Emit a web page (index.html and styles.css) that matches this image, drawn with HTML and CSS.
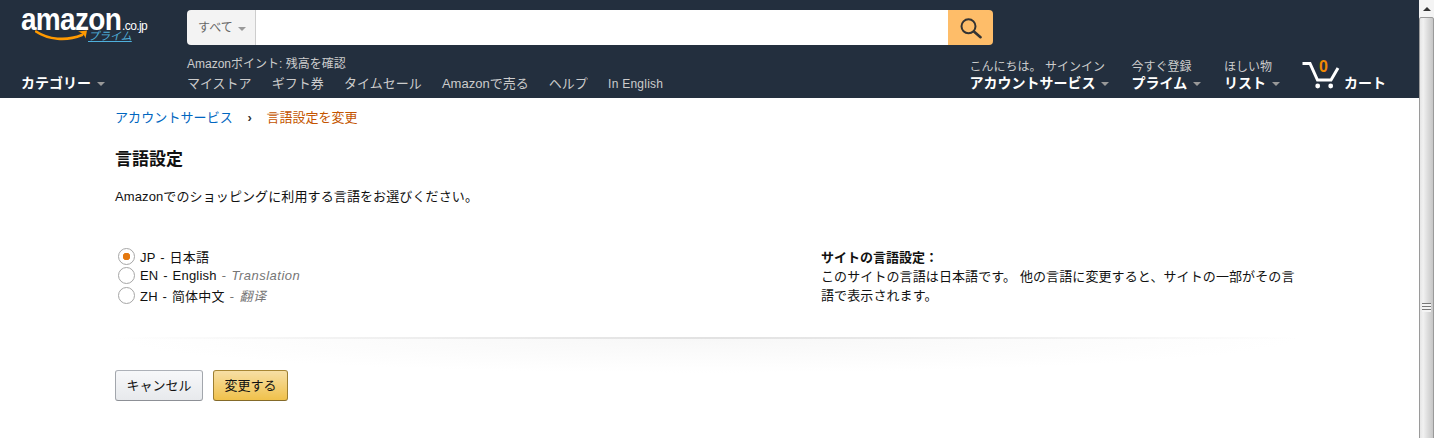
FILE: index.html
```html
<!DOCTYPE html>
<html lang="ja">
<head>
    <meta charset="UTF-8">
    <title>言語設定</title>
    <link rel="stylesheet" href="styles.css">
</head>
<body>
    <div class="page">
        <div class="header">
            <div class="header-top">
                <a class="logo" href="#">
                    <span class="logo-word">amazon</span><span class="logo-tld">.co.jp</span>
                    <span class="logo-prime">プライム</span>
                    <svg class="logo-smile" width="54" height="14" viewBox="0 0 54 14">
                        <path d="M1 1.5C13 9.5 31 11.5 47 5" fill="none" stroke="#f90" stroke-width="2.6" stroke-linecap="round"/>
                        <path d="M43 1.5L52 0.5L50.5 8.5C50 5.5 47 3 43 1.5Z" fill="#f90"/>
                    </svg>
                </a>
                <div class="search">
                    <div class="search-scope">すべて <span class="caret"></span></div>
                    <div class="search-input"></div>
                    <div class="search-btn">
                        <svg width="22" height="22" viewBox="0 0 22 22">
                            <circle cx="8.5" cy="9.3" r="7" fill="none" stroke="#333" stroke-width="2"/>
                            <path d="M14.2 14.7L20.5 20.2" fill="none" stroke="#333" stroke-width="2.6" stroke-linecap="round"/>
                        </svg>
                    </div>
                </div>
            </div>
            <div class="header-bottom">
                <a class="category" href="#">カテゴリー <span class="caret"></span></a>
                <div class="nav-main">
                    <div class="points">Amazonポイント: 残高を確認</div>
                    <div class="nav-links">
                        <a href="#">マイストア</a>
                        <a href="#">ギフト券</a>
                        <a href="#">タイムセール</a>
                        <a href="#">Amazonで売る</a>
                        <a href="#">ヘルプ</a>
                        <a class="small" href="#">In English</a>
                    </div>
                </div>
                <div class="nav-right">
                    <a class="nav-tool tool-account" href="#">
                        <span class="tool-line1">こんにちは。 サインイン</span>
                        <span class="tool-line2">アカウントサービス <span class="caret"></span></span>
                    </a>
                    <a class="nav-tool tool-prime" href="#">
                        <span class="tool-line1">今すぐ登録</span>
                        <span class="tool-line2">プライム <span class="caret"></span></span>
                    </a>
                    <a class="nav-tool tool-list" href="#">
                        <span class="tool-line1">ほしい物</span>
                        <span class="tool-line2">リスト <span class="caret"></span></span>
                    </a>
                    <a class="cart" href="#">
                        <svg class="cart-icon" width="40" height="30" viewBox="0 0 40 30">
                            <path d="M0.5 3.5H8L15.5 20H29L36 8" fill="none" stroke="#fff" stroke-width="3"/>
                            <circle cx="15.7" cy="26" r="2.4" fill="#fff"/>
                            <circle cx="28.7" cy="26" r="2.4" fill="#fff"/>
                        </svg>
                        <span class="cart-count">0</span>
                        <span class="cart-label">カート</span>
                    </a>
                </div>
            </div>
        </div>

        <div class="content">
            <div class="breadcrumb">
                <a href="#">アカウントサービス</a>
                <span class="crumb-sep">›</span>
                <span class="crumb-current">言語設定を変更</span>
            </div>
            <h1>言語設定</h1>
            <p class="intro">Amazonでのショッピングに利用する言語をお選びください。</p>
            <div class="lang-row">
                <div class="lang-list">
                    <label class="lang"><span class="radio checked"></span><span>JP - 日本語</span></label>
                    <label class="lang"><span class="radio"></span><span>EN - English <em>- Translation</em></span></label>
                    <label class="lang"><span class="radio"></span><span>ZH - 简体中文 <em>- 翻译</em></span></label>
                </div>
                <div class="lang-note">
                    <b>サイトの言語設定：</b><br>
                    このサイトの言語は日本語です。 他の言語に変更すると、サイトの一部がその言語で表示されます。
                </div>
            </div>
            <div class="divider"></div>
            <div class="actions">
                <a class="btn btn-cancel" href="#">キャンセル</a>
                <a class="btn btn-primary" href="#">変更する</a>
            </div>
        </div>
    </div>

    <div class="scrollbar">
        <div class="scroll-up"></div>
        <div class="scroll-thumb">
            <div class="grip"></div>
        </div>
    </div>
</body>
</html>
```

FILE: styles.css
```css
html, body {
    height: 100%;
}

body {
    margin: 0;
    display: flex;
    overflow: hidden;
    background: #fff;
    color: #111;
    font-family: "Liberation Sans", "Noto Sans CJK JP", sans-serif;
    font-size: 13px;
}

a {
    color: inherit;
    text-decoration: none;
}

.page {
    flex: 1;
    min-width: 0;
}

.caret {
    display: inline-block;
    width: 0;
    height: 0;
    margin-left: 2px;
    vertical-align: middle;
    border-style: solid;
    border-width: 4px 4px 0;
    border-color: #999 transparent transparent;
}

/* header */
.header {
    height: 98px;
    box-sizing: border-box;
    padding-top: 10px;
    background: #232f3e;
    color: #fff;
}

.header-top {
    display: flex;
}

.logo {
    position: relative;
    display: block;
    width: 187px;
    height: 35px;
    flex: none;
    box-sizing: border-box;
    padding: 2px 0 0 21px;
    white-space: nowrap;
}

.logo-word {
    display: inline-block;
    font-size: 28px;
    font-weight: bold;
    line-height: 18px;
    letter-spacing: -0.7px;
    transform: scaleY(1.14);
    transform-origin: 0 100%;
}

.logo-tld {
    margin-left: 1px;
    font-size: 12px;
    letter-spacing: -0.6px;
}

.logo-prime {
    position: absolute;
    left: 88px;
    top: 21px;
    color: #4fb0dc;
    font-size: 11px;
    font-style: italic;
    line-height: 11px;
    text-decoration: underline;
}

.logo-smile {
    position: absolute;
    left: 35px;
    top: 20px;
}

.search {
    display: flex;
    width: 806px;
    height: 35px;
    border-radius: 4px;
    overflow: hidden;
}

.search-scope {
    width: 69px;
    box-sizing: border-box;
    padding-left: 11px;
    background: #f3f3f3;
    border-right: 1px solid #cdcdcd;
    color: #666;
    font-size: 12px;
    line-height: 37px;
}

.search-input {
    flex: 1;
    background: #fff;
}

.search-btn {
    width: 45px;
    display: flex;
    align-items: center;
    justify-content: center;
    background: #febd69;
}

.header-bottom {
    display: flex;
    margin-top: 8px;
}

.category {
    width: 187px;
    flex: none;
    box-sizing: border-box;
    padding: 20px 0 0 21px;
    font-size: 14px;
    font-weight: bold;
    line-height: 20px;
}

.nav-main {
    flex: 1;
}

.points {
    color: #ccc;
    font-size: 12px;
    line-height: 17px;
    margin-top: 3px;
}

.nav-links {
    display: flex;
    gap: 20.2px;
    margin-top: 2px;
    color: #ccc;
    font-size: 13px;
    line-height: 18px;
}

.nav-links .small {
    font-size: 12px;
    letter-spacing: 0.25px;
}

.nav-right {
    display: flex;
    padding-right: 33px;
}

.nav-tool {
    display: flex;
    flex-direction: column;
    margin-right: 23px;
    padding-top: 7px;
}

.tool-account {
    margin-right: 22px;
}

.tool-list {
    margin-right: 22px;
}

.tool-line1 {
    color: #ccc;
    font-size: 12px;
    line-height: 14px;
}

.tool-line2 {
    font-size: 14px;
    font-weight: bold;
    line-height: 19px;
}

.cart {
    position: relative;
    display: flex;
    align-items: flex-end;
    gap: 2px;
}

.cart-icon {
    align-self: flex-start;
    margin-top: 7px;
}

.cart-count {
    position: absolute;
    left: 17px;
    top: 5px;
    color: #f08804;
    font-size: 16px;
    font-weight: bold;
}

.cart-label {
    font-size: 14px;
    font-weight: bold;
    line-height: 20px;
}

/* content */
.content {
    padding: 0 120px 0 115px;
}

.breadcrumb {
    padding-top: 11px;
    line-height: 18px;
}

.breadcrumb a {
    color: #0066c0;
    letter-spacing: 0.1px;
}

.crumb-sep {
    margin: 0 11px;
    color: #333;
    font-weight: bold;
}

.crumb-current {
    color: #c45500;
}

h1 {
    margin: 22px 0 0;
    font-size: 17px;
    font-weight: bold;
    line-height: 22px;
}

.intro {
    margin: 16px 0 0;
    line-height: 20px;
    letter-spacing: 0.11px;
}

.lang-row {
    display: flex;
    margin-top: 39.5px;
}

.lang-list {
    width: 706px;
    flex: none;
}

.lang {
    display: flex;
    align-items: center;
    gap: 5px;
    height: 19.5px;
    padding-left: 3px;
    word-spacing: 1px;
    letter-spacing: 0.2px;
}

.lang em {
    color: #767676;
    letter-spacing: 0.5px;
}

.radio {
    width: 17px;
    height: 17px;
    flex: none;
    box-sizing: border-box;
    border: 1px solid #a6a6a6;
    border-radius: 50%;
    background: #fff;
}

.radio.checked {
    background: radial-gradient(circle, #e47911 0 3.5px, #fff 4px);
}

.lang-note {
    margin-top: 1.5px;
    line-height: 19px;
    letter-spacing: 0.1px;
}

.lang-note b {
    letter-spacing: 0;
}

.divider {
    height: 38px;
    margin-top: 31.5px;
    background:
        linear-gradient(90deg, transparent, #e2e2e2 50%, transparent) top / 100% 2px no-repeat,
        radial-gradient(ellipse 50% 36px at 50% 0, #f7f7f7, #fff 100%);
}

.actions {
    display: flex;
    gap: 10px;
    margin-top: -5px;
}

.btn {
    height: 31px;
    box-sizing: border-box;
    padding: 0 10.5px;
    border: 1px solid;
    border-radius: 3px;
    font-size: 13px;
    line-height: 29px;
}

.btn-cancel {
    border-color: #adb1b8 #a2a6ac #8d9096;
    background: linear-gradient(#f7f8fa, #e7e9ec);
}

.btn-primary {
    border-color: #a88734 #9c7e31 #846a29;
    background: linear-gradient(#f7dfa5, #f0c14b);
}

/* scrollbar */
.scrollbar {
    width: 15px;
    flex: none;
    overflow: hidden;
    background: #f0f0f0;
}

.scroll-up {
    display: flex;
    align-items: center;
    justify-content: center;
    height: 17px;
    background: #f4f4f4;
}

.scroll-up::before {
    content: "";
    border-style: solid;
    border-width: 0 4px 4px;
    border-color: transparent transparent #333;
}

.scroll-thumb {
    height: 581px;
    box-sizing: border-box;
    display: flex;
    align-items: center;
    justify-content: center;
    border: 1px solid #9a9a9a;
    border-radius: 2px;
    background: linear-gradient(90deg, #e6e6e6, #f1f1f1 25%, #dcdcdc 60%, #c6c6c6);
}

.grip {
    width: 9px;
    height: 9px;
    background: repeating-linear-gradient(#777 0 1px, #f4f4f4 1px 3px);
}
```
